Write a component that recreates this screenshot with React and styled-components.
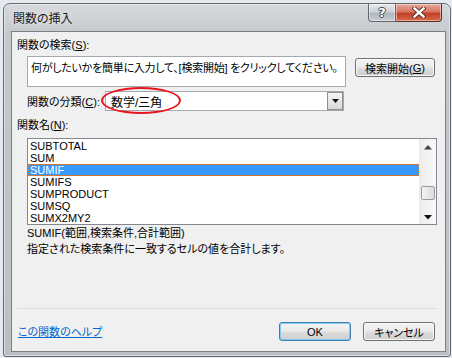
import React from 'react';
import styled, { createGlobalStyle } from 'styled-components';

const GlobalStyle = createGlobalStyle`
  html, body {
    margin: 0;
    padding: 0;
    background: #e4eaf0;
  }
  body {
    font-family: "Liberation Sans", "Noto Sans CJK JP", sans-serif;
    font-size: 11px;
    color: #000;
    font-feature-settings: "palt";
  }
`;

const Desktop = styled.div`
  width: 452px;
  height: 358px;
  padding: 3px 0 0 3px;
  box-sizing: border-box;
  overflow: hidden;
`;

const Window = styled.div`
  width: 448px;
  height: 354px;
  box-sizing: border-box;
  border: 1px solid #65696e;
  border-radius: 7px 7px 3px 3px;
  background: linear-gradient(180deg, #d6d9dc 0%, #c4c8cc 9%, #bcc0c5 100%);
  box-shadow: inset 0 0 0 1px rgba(255, 255, 255, 0.45);
  display: flex;
  flex-direction: column;
`;

const TitleBar = styled.div`
  height: 27px;
  display: flex;
  align-items: center;
  padding-left: 9px;
  flex-shrink: 0;
`;

const Title = styled.span`
  font-family: "Noto Sans CJK JP", sans-serif;
  font-size: 12px;
  color: #1a1a1a;
  text-shadow: 0 0 6px rgba(255, 255, 255, 0.9);
`;

const CaptionButtons = styled.div`
  margin-left: auto;
  margin-right: 8px;
  align-self: flex-start;
  display: flex;
`;

const CaptionButton = styled.div`
  width: ${p => p.$w}px;
  height: 18px;
  box-sizing: border-box;
  border: 1px solid ${p => (p.$close ? '#5c3029' : '#5f6770')};
  border-top: none;
  border-radius: ${p => (p.$close ? '0 0 4px 0' : '0 0 0 4px')};
  border-left-width: ${p => (p.$close ? 0 : 1)}px;
  background: ${p =>
    p.$close
      ? 'linear-gradient(180deg, #e6a99c 0%, #d87763 45%, #c4402a 55%, #d9684a 100%)'
      : 'linear-gradient(180deg, #e8eaec 0%, #cfd3d7 45%, #b2b7bd 55%, #c9cdd2 100%)'};
  box-shadow: inset 0 0 0 1px rgba(255, 255, 255, 0.45);
  display: flex;
  align-items: center;
  justify-content: center;
`;

const HelpGlyph = styled.span`
  font-family: "DejaVu Sans", sans-serif;
  font-weight: bold;
  font-size: 13px;
  line-height: 1;
  color: #fff;
  text-shadow: -1px 0 #3c444c, 1px 0 #3c444c, 0 -1px #3c444c, 0 1px #3c444c;
`;

const Client = styled.div`
  flex: 1;
  margin: 0 4px 4px 7px;
  border: 1px solid #7b8085;
  background: #f0f0f0;
  display: flex;
  flex-direction: column;
  padding: 6px 8px 10px 5px;
  min-height: 0;
`;

const Label = styled.div`
  line-height: 14px;
  height: 14px;
  white-space: nowrap;
  margin-top: ${p => p.$mt || 0}px;
  margin-left: ${p => p.$ml || 0}px;
`;

const Key = styled.span`
  text-decoration: underline;
`;

const Row = styled.div`
  display: flex;
  align-items: ${p => p.$align || 'center'};
  margin-left: 10px;
  margin-top: ${p => p.$mt || 0}px;
  position: relative;
`;

const SearchBox = styled.div`
  flex: 1;
  height: 31px;
  box-sizing: border-box;
  border: 1px solid #a5a9ae;
  background: #fff;
  padding: 4px 3px;
  line-height: 14px;
  letter-spacing: -0.25px;
  white-space: nowrap;
  overflow: hidden;
`;

const Button = styled.div`
  width: ${p => p.$w || 72}px;
  height: ${p => p.$h || 19}px;
  box-sizing: border-box;
  margin-top: ${p => p.$mt || 0}px;
  border: 1px solid ${p => (p.$default ? '#3c7fb1' : '#707070')};
  border-radius: 3px;
  background: linear-gradient(180deg, #f2f2f2 0%, #ebebeb 48%, #dddddd 52%, #cfcfcf 100%);
  box-shadow: inset 0 0 0 1px ${p => (p.$default ? 'rgba(120, 200, 240, 0.9)' : 'rgba(255, 255, 255, 0.8)')};
  display: flex;
  align-items: center;
  justify-content: center;
  white-space: nowrap;
  flex-shrink: 0;
`;

const SearchButton = styled(Button)`
  margin-left: 9px;
  margin-right: 2px;
`;

const CategoryLabel = styled.div`
  width: 78px;
  white-space: nowrap;
`;

const Select = styled.div`
  width: 239px;
  height: 20px;
  box-sizing: border-box;
  border: 1px solid #a5a9ae;
  background: #fff;
  display: flex;
  align-items: center;
  padding-left: 5px;
`;

const SelectText = styled.span`
  flex: 1;
  font-size: 12px;
`;

const DropButton = styled.div`
  width: 16px;
  height: 18px;
  box-sizing: border-box;
  border: 1px solid #8d9196;
  background: linear-gradient(180deg, #f4f4f4, #d9d9d9);
  display: flex;
  align-items: center;
  justify-content: center;
`;

const Highlight = styled.div`
  position: absolute;
  left: 74px;
  top: -4px;
  width: 80px;
  height: 27px;
  box-sizing: border-box;
  border: 2px solid #e8141e;
  border-radius: 50%;
  pointer-events: none;
`;

const ListBox = styled.div`
  margin-left: 10px;
  margin-top: 6px;
  height: 87px;
  box-sizing: border-box;
  border: 1px solid #828790;
  background: #fff;
  display: flex;
`;

const ListItems = styled.div`
  flex: 1;
  padding-top: 1px;
`;

const ListItem = styled.div`
  height: 12px;
  line-height: 12px;
  padding-left: 2px;
  box-sizing: border-box;
  background: ${p => (p.$selected ? '#3399ff' : 'transparent')};
  color: ${p => (p.$selected ? '#fff' : '#000')};
  outline: ${p => (p.$selected ? '1px dotted #d9782e' : 'none')};
  outline-offset: -1px;
`;

const ScrollBar = styled.div`
  width: 17px;
  background: linear-gradient(90deg, #ececec, #f8f8f8);
  display: flex;
  flex-direction: column;
  align-items: center;
  padding: 6px 0 4px;
  box-sizing: border-box;
`;

const Thumb = styled.div`
  width: 14px;
  height: 14px;
  box-sizing: border-box;
  margin-top: 36px;
  border: 1px solid #9a9a9a;
  border-radius: 2px;
  background: linear-gradient(90deg, #f3f3f3, #dcdcdc);
`;

const Spacer = styled.div`
  flex: 1;
`;

const Description = styled.div`
  margin-left: 10px;
  line-height: 16px;
  white-space: nowrap;
`;

const Separator = styled.div`
  height: 1px;
  background: #d6dde5;
`;

const Footer = styled.div`
  display: flex;
  align-items: center;
  margin-top: 13px;
`;

const HelpLink = styled.a`
  color: #0066cc;
  text-decoration: underline;
  margin-left: 1px;
  line-height: 14px;
`;

const FooterButtons = styled.div`
  margin-left: auto;
  margin-right: 2px;
  display: flex;
  gap: 12px;
`;

const Triangle = ({ down = true, size = 7 }) => (
  <svg width={size} height={size / 2 + 1} viewBox="0 0 8 5">
    <path d={down ? 'M0 0 H8 L4 4.5 Z' : 'M0 4.5 H8 L4 0 Z'} fill={down ? '#111' : '#444'} />
  </svg>
);

const CloseIcon = () => (
  <svg width="14" height="11" viewBox="0 0 14 11">
    <path
      d="M2.5 1.5 L11.5 9.5 M11.5 1.5 L2.5 9.5"
      stroke="#4a2520"
      strokeWidth="4.2"
      strokeLinecap="square"
    />
    <path
      d="M2.5 1.5 L11.5 9.5 M11.5 1.5 L2.5 9.5"
      stroke="#fff"
      strokeWidth="2.4"
      strokeLinecap="square"
    />
  </svg>
);

const functions = ['SUBTOTAL', 'SUM', 'SUMIF', 'SUMIFS', 'SUMPRODUCT', 'SUMSQ', 'SUMX2MY2'];

export default function App() {
  return (
    <>
      <GlobalStyle />
      <Desktop>
        <Window>
          <TitleBar>
            <Title>関数の挿入</Title>
            <CaptionButtons>
              <CaptionButton $w={28}>
                <HelpGlyph>?</HelpGlyph>
              </CaptionButton>
              <CaptionButton $w={46} $close>
                <CloseIcon />
              </CaptionButton>
            </CaptionButtons>
          </TitleBar>

          <Client>
            <Label>
              関数の検索(<Key>S</Key>):
            </Label>
            <Row $align="flex-start" $mt={4}>
              <SearchBox>何がしたいかを簡単に入力して、[検索開始] をクリックしてください。</SearchBox>
              <SearchButton $w={80} $mt={2}>
                検索開始(<Key>G</Key>)
              </SearchButton>
            </Row>
            <Row $mt={4}>
              <CategoryLabel>
                関数の分類(<Key>C</Key>):
              </CategoryLabel>
              <Select>
                <SelectText>数学/三角</SelectText>
                <DropButton>
                  <Triangle />
                </DropButton>
              </Select>
              <Highlight />
            </Row>

            <Label $mt={7}>
              関数名(<Key>N</Key>):
            </Label>
            <ListBox>
              <ListItems>
                {functions.map(name => (
                  <ListItem key={name} $selected={name === 'SUMIF'}>
                    {name}
                  </ListItem>
                ))}
              </ListItems>
              <ScrollBar>
                <Triangle down={false} size={8} />
                <Thumb />
                <Spacer />
                <Triangle size={8} />
              </ScrollBar>
            </ListBox>

            <Description>SUMIF(範囲,検索条件,合計範囲)</Description>
            <Description>指定された検索条件に一致するセルの値を合計します。</Description>

            <Spacer />
            <Separator />
            <Footer>
              <HelpLink href="#">この関数のヘルプ</HelpLink>
              <FooterButtons>
                <Button $default>OK</Button>
                <Button>キャンセル</Button>
              </FooterButtons>
            </Footer>
          </Client>
        </Window>
      </Desktop>
    </>
  );
}
